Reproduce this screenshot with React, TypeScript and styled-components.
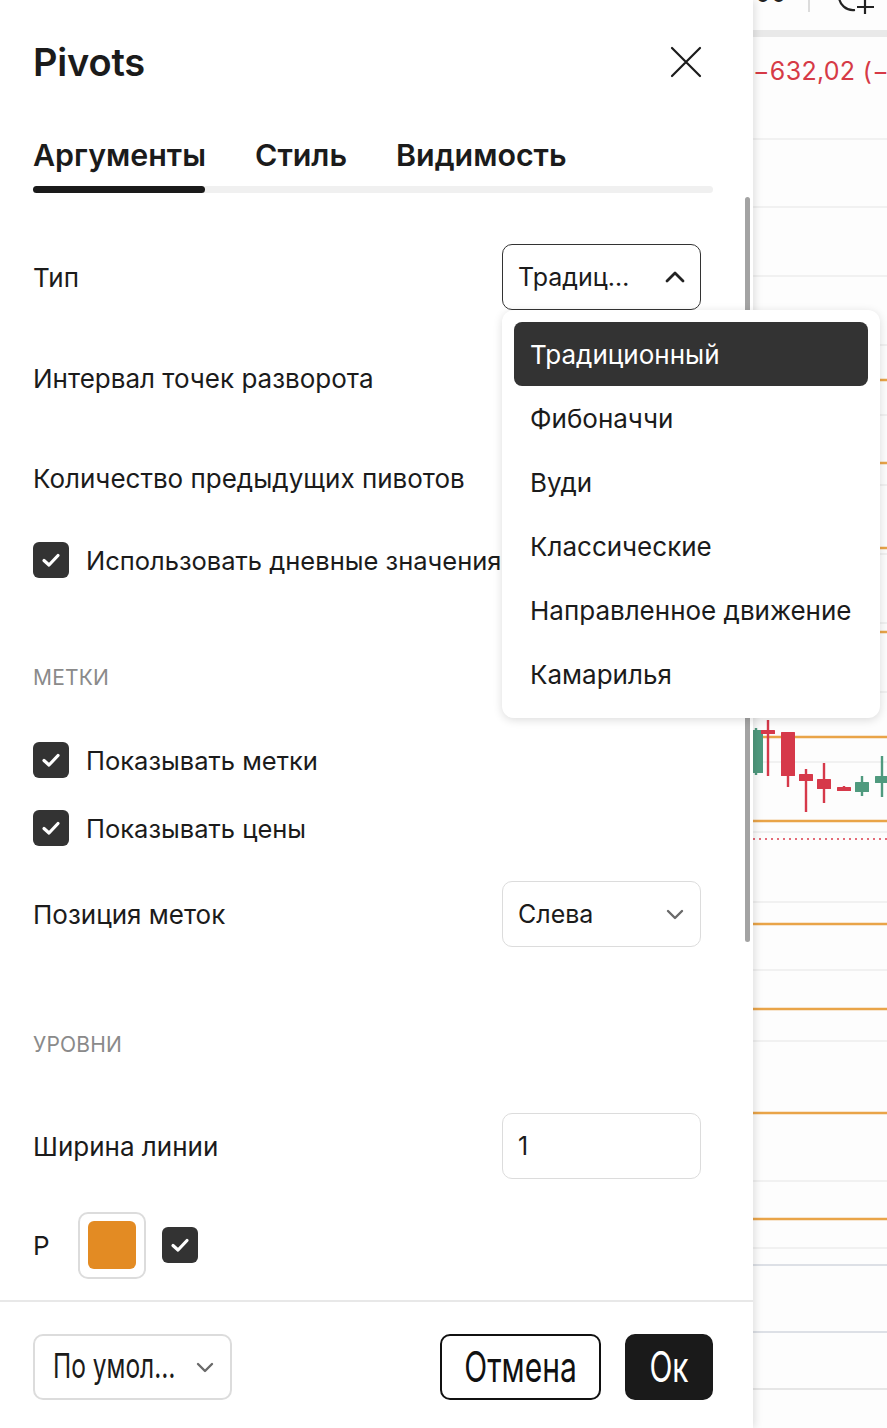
import React from "react";
import styled, { createGlobalStyle } from "styled-components";

const GlobalStyle = createGlobalStyle`
  html, body {
    margin: 0;
    padding: 0;
    background: #ffffff;
    font-family: Inter, "Noto Sans", "Liberation Sans", sans-serif;
    color: #1b1b1b;
  }
  * { box-sizing: border-box; }
`;

const Page = styled.div`
  width: 887px;
  height: 1428px;
  display: flex;
  overflow: hidden;
  position: relative;
`;

const Panel = styled.div`
  position: relative;
  z-index: 2;
  width: 753px;
  height: 100%;
  flex-shrink: 0;
  background: #fff;
  display: flex;
  flex-direction: column;
  box-shadow: 2px 0 8px rgba(0, 0, 0, 0.12);
`;

const Header = styled.div`
  height: 124px;
  padding: 0 50px 0 33px;
  display: flex;
  align-items: center;
  justify-content: space-between;
`;

const Title = styled.h1`
  margin: 0;
  font-size: 38px;
  font-weight: 600;
  letter-spacing: -0.2px;
`;

const CloseButton = styled.button`
  width: 34px;
  height: 34px;
  padding: 0;
  border: 0;
  background: none;
  display: flex;
  align-items: center;
  justify-content: center;
`;

const Tabs = styled.div`
  padding: 0 40px 0 33px;
`;

const TabRow = styled.div`
  height: 62px;
  display: flex;
  align-items: center;
  gap: 49px;
`;

const Tab = styled.span`
  font-size: 30.4px;
  font-weight: 600;
`;

const TabTrack = styled.div`
  height: 7px;
  border-radius: 4px;
  background: #f0f0f0;
  display: flex;
`;

const TabIndicator = styled.div<{ $w: number }>`
  width: ${(p) => p.$w}px;
  height: 7px;
  border-radius: 4px;
  background: #1a1a1a;
`;

const Content = styled.div`
  flex: 1;
  padding: 0 52px 0 33px;
  overflow: hidden;
`;

const Row = styled.div<{ $mt: number }>`
  margin-top: ${(p) => p.$mt}px;
  height: 66px;
  display: flex;
  align-items: center;
  justify-content: space-between;
`;

const Label = styled.span`
  font-size: 26px;
`;

const SectionLabel = styled.span`
  font-size: 21px;
  color: #8a8a8a;
  letter-spacing: 0.2px;
`;

const CheckRow = styled.label`
  display: flex;
  align-items: center;
  gap: 17px;
  font-size: 25.5px;
  white-space: nowrap;
`;

const Check = styled.span`
  width: 36px;
  height: 36px;
  border-radius: 6px;
  background: #333;
  display: inline-flex;
  align-items: center;
  justify-content: center;
  flex-shrink: 0;
`;

const Field = styled.div<{ $active?: boolean }>`
  width: 199px;
  height: 66px;
  border: 1.5px solid ${(p) => (p.$active ? "#333" : "#dcdcdc")};
  border-radius: 10px;
  padding: 0 14px 0 15px;
  display: flex;
  align-items: center;
  justify-content: space-between;
  font-size: 25px;
  background: #fff;
`;

const ColorGroup = styled.div`
  display: flex;
  align-items: center;
`;

const ColorLabel = styled.span`
  font-size: 26px;
  width: 45px;
`;

const Swatch = styled.div<{ $color: string }>`
  width: 68px;
  height: 67px;
  border: 2px solid #dcdcdc;
  border-radius: 10px;
  display: flex;
  align-items: center;
  justify-content: center;
  margin-right: 16px;
  &::after {
    content: "";
    width: 48px;
    height: 48px;
    border-radius: 6px;
    background: ${(p) => p.$color};
  }
`;

const Footer = styled.div`
  height: 128px;
  border-top: 2px solid #e8e8e8;
  padding: 3px 40px 0 33px;
  display: flex;
  align-items: center;
  gap: 24px;
`;

const Tall = styled.span<{ $size: number }>`
  display: inline-block;
  font-size: ${(p) => p.$size}px;
  line-height: 1;
  transform: scaleY(1.4);
  white-space: nowrap;
`;

const FooterSelect = styled.div`
  width: 199px;
  height: 66px;
  border: 2px solid #dcdcdc;
  border-radius: 10px;
  display: flex;
  align-items: center;
  justify-content: space-between;
  padding: 0 14px 0 18px;
  margin-right: auto;
`;

const Button = styled.button<{ $primary?: boolean; $w: number }>`
  width: ${(p) => p.$w}px;
  height: 66px;
  border-radius: 10px;
  border: 2px solid ${(p) => (p.$primary ? "#1a1a1a" : "#111")};
  background: ${(p) => (p.$primary ? "#1a1a1a" : "#fff")};
  color: ${(p) => (p.$primary ? "#fff" : "#111")};
  font-family: inherit;
  padding: 0;
  display: flex;
  align-items: center;
  justify-content: center;
  overflow: hidden;
`;

const ScrollThumb = styled.div`
  position: absolute;
  left: 745px;
  top: 197px;
  width: 5px;
  height: 745px;
  border-radius: 3px;
  background: #a3a3a3;
`;

const Menu = styled.div`
  position: absolute;
  z-index: 5;
  left: 502px;
  top: 310px;
  width: 378px;
  padding: 12px;
  background: #fff;
  border-radius: 12px;
  box-shadow: 0 2px 10px rgba(0, 0, 0, 0.14);
`;

const MenuItem = styled.div<{ $selected?: boolean }>`
  height: 64px;
  padding: 0 16px;
  border-radius: 8px;
  display: flex;
  align-items: center;
  font-size: 26px;
  white-space: nowrap;
  background: ${(p) => (p.$selected ? "#333" : "transparent")};
  color: ${(p) => (p.$selected ? "#fff" : "#1b1b1b")};
`;

const Chart = styled.div`
  position: relative;
  flex: 1;
  background: #fdfdfd;
  overflow: hidden;
`;

const ChartDrawing = styled.svg`
  position: absolute;
  inset: 0;
`;

const ChangeText = styled.div`
  position: relative;
  margin-top: 56px;
  font-size: 25px;
  color: #d63a46;
  white-space: nowrap;
  letter-spacing: 0.3px;
`;

const TopPartial = styled.div`
  position: relative;
  height: 0;
  font-size: 25px;
  color: #222;
  white-space: nowrap;
  span {
    display: block;
    transform: translate(2px, -22px);
  }
`;

const CheckIcon = () => (
  <svg width="20" height="16" viewBox="0 0 20 16">
    <path d="M3 8.5l5 4.5L17 3.5" fill="none" stroke="#fff" strokeWidth="3.2" strokeLinecap="round" strokeLinejoin="round" />
  </svg>
);

const Chevron = ({ up, color = "#222" }: { up?: boolean; color?: string }) => (
  <svg width="22" height="14" viewBox="0 0 22 14">
    <path
      d={up ? "M3 11l8-8 8 8" : "M4 4l7 7 7-7"}
      fill="none"
      stroke={color}
      strokeWidth={up ? 2.8 : 2.4}
      strokeLinecap="round"
      strokeLinejoin="round"
    />
  </svg>
);

const options = [
  "Традиционный",
  "Фибоначчи",
  "Вуди",
  "Классические",
  "Направленное движение",
  "Камарилья",
];

const gridLines = [139, 207, 276, 345, 415, 485, 554, 623, 692, 762, 832, 902, 970, 1041, 1181, 1248];
const levelLines = [380, 463, 548, 632, 737, 821, 924, 1009, 1113, 1219];

// candles: x (left, chart coords), body top/bottom, wick top/bottom, up
const candles = [
  { x: -4, bt: 730, bb: 773, wt: 728, wb: 775, up: true },
  { x: 8, bt: 730, bb: 734, wt: 720, wb: 776, up: false },
  { x: 28, bt: 732, bb: 776, wt: 732, wb: 787, up: false },
  { x: 46, bt: 774, bb: 781, wt: 769, wb: 812, up: false },
  { x: 64, bt: 779, bb: 789, wt: 763, wb: 803, up: false },
  { x: 84, bt: 787, bb: 791, wt: 786, wb: 791, up: false },
  { x: 102, bt: 782, bb: 792, wt: 776, wb: 796, up: true },
  { x: 122, bt: 776, bb: 783, wt: 756, wb: 797, up: true },
];

const ChartSvg = () => (
  <ChartDrawing width="134" height="1428" viewBox="0 0 134 1428">
    <rect x="0" y="30" width="134" height="7" fill="#e9e9e9" />
    <line x1="56" y1="0" x2="56" y2="12" stroke="#dcdcdc" strokeWidth="2" />
    <path d="M102 10 A14 14 0 0 1 86 -4" fill="none" stroke="#222" strokeWidth="2.2" />
    <path d="M112 0 V14 M104 7 H121" fill="none" stroke="#222" strokeWidth="2.2" />
    {gridLines.map((y) => (
      <line key={y} x1="0" y1={y} x2="134" y2={y} stroke="#f1f1f1" strokeWidth="2" />
    ))}
    <line x1="0" y1="1265" x2="134" y2="1265" stroke="#dde0e6" strokeWidth="2" />
    <line x1="0" y1="1332" x2="134" y2="1332" stroke="#dde0e6" strokeWidth="2" />
    <line x1="0" y1="1389" x2="134" y2="1389" stroke="#e6e6e6" strokeWidth="2" />
    {levelLines.map((y) => (
      <line key={y} x1="0" y1={y} x2="134" y2={y} stroke="#e9a448" strokeWidth="2.4" />
    ))}
    <line x1="0" y1="839" x2="134" y2="839" stroke="#e46b78" strokeWidth="2" strokeDasharray="2 4" />
    {candles.map((c, i) => {
      const col = c.up ? "#4f9a7e" : "#d6394a";
      return (
        <g key={i}>
          <line x1={c.x + 7} y1={c.wt} x2={c.x + 7} y2={c.wb} stroke={col} strokeWidth="2.4" />
          <rect x={c.x} y={c.bt} width="14" height={Math.max(3, c.bb - c.bt)} fill={col} rx="0.5" />
        </g>
      );
    })}
  </ChartDrawing>
);

export default function App() {
  return (
    <>
      <GlobalStyle />
      <Page>
        <Panel>
          <Header>
            <Title>Pivots</Title>
            <CloseButton aria-label="close">
              <svg width="34" height="34" viewBox="0 0 34 34">
                <path d="M3 3l28 28M31 3L3 31" stroke="#1b1b1b" strokeWidth="2.2" strokeLinecap="round" />
              </svg>
            </CloseButton>
          </Header>
          <Tabs>
            <TabRow>
              <Tab>Аргументы</Tab>
              <Tab>Стиль</Tab>
              <Tab>Видимость</Tab>
            </TabRow>
            <TabTrack>
              <TabIndicator $w={172} />
            </TabTrack>
          </Tabs>
          <Content>
            <Row $mt={51}>
              <Label>Тип</Label>
              <Field $active>
                <span>Традиц…</span>
                <Chevron up />
              </Field>
            </Row>
            <Row $mt={35}>
              <Label>Интервал точек разворота</Label>
            </Row>
            <Row $mt={34}>
              <Label>Количество предыдущих пивотов</Label>
            </Row>
            <Row $mt={16}>
              <CheckRow>
                <Check>
                  <CheckIcon />
                </Check>
                Использовать дневные значения
              </CheckRow>
            </Row>
            <Row $mt={51}>
              <SectionLabel>МЕТКИ</SectionLabel>
            </Row>
            <Row $mt={17}>
              <CheckRow>
                <Check>
                  <CheckIcon />
                </Check>
                Показывать метки
              </CheckRow>
            </Row>
            <Row $mt={2}>
              <CheckRow>
                <Check>
                  <CheckIcon />
                </Check>
                Показывать цены
              </CheckRow>
            </Row>
            <Row $mt={20}>
              <Label>Позиция меток</Label>
              <Field>
                <span>Слева</span>
                <Chevron color="#6a6a6a" />
              </Field>
            </Row>
            <Row $mt={64}>
              <SectionLabel>УРОВНИ</SectionLabel>
            </Row>
            <Row $mt={36}>
              <Label>Ширина линии</Label>
              <Field>
                <span>1</span>
              </Field>
            </Row>
            <Row $mt={33}>
              <ColorGroup>
                <ColorLabel>P</ColorLabel>
                <Swatch $color="#e38b23" />
                <Check>
                  <CheckIcon />
                </Check>
              </ColorGroup>
            </Row>
          </Content>
          <Footer>
            <FooterSelect>
              <Tall $size={24.5}>По умол…</Tall>
              <Chevron color="#6a6a6a" />
            </FooterSelect>
            <Button $w={161}>
              <Tall $size={30}>Отмена</Tall>
            </Button>
            <Button $primary $w={88}>
              <Tall $size={30}>Ок</Tall>
            </Button>
          </Footer>
          <ScrollThumb />
          <Menu>
            {options.map((o, i) => (
              <MenuItem key={o} $selected={i === 0}>
                {o}
              </MenuItem>
            ))}
          </Menu>
        </Panel>
        <Chart>
          <ChartSvg />
          <TopPartial>
            <span>00</span>
          </TopPartial>
          <ChangeText>−632,02 (−0,41%)</ChangeText>
        </Chart>
      </Page>
    </>
  );
}
